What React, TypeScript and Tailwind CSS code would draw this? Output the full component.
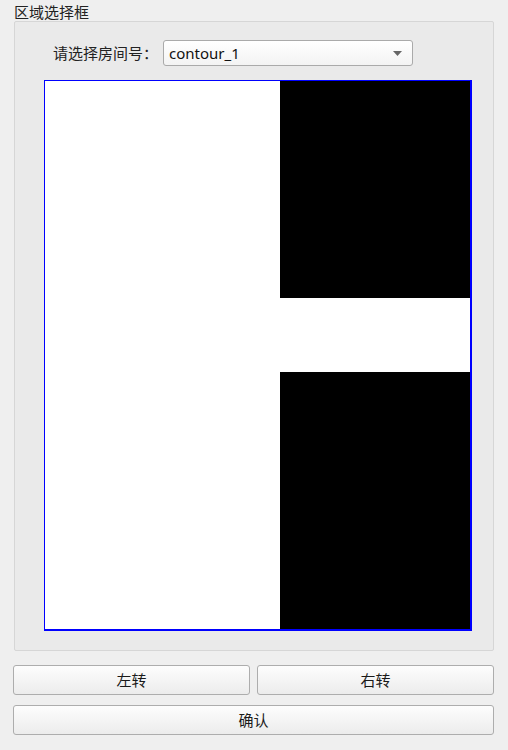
import React from "react";

const font = { fontFamily: '"Noto Sans", "Noto Sans CJK SC", sans-serif' };

function Btn({ children }: { children: React.ReactNode }) {
  return (
    <button className="h-[30px] w-full rounded-[3px] border border-[#adadad] bg-gradient-to-b from-[#fdfdfd] to-[#ececec] text-[15px] text-[#1a1a1a] leading-none flex items-center justify-center">
      {children}
    </button>
  );
}

export default function App() {
  return (
    <div
      className="w-[508px] h-[750px] bg-[#efefef] flex flex-col pl-[13px] pr-[14px] text-[#222]"
      style={font}
    >
      <div className="h-[21px] pt-[3px] pl-[1px] leading-[18px] text-[15px]">区域选择框</div>
      <div className="ml-[1px] h-[630px] border border-[#d6d6d6] rounded-[2px] bg-[#eaeaea] flex flex-col pt-[18px]">
        <div className="flex items-center pl-[38px] h-[26px]">
          <div className="w-[110px] text-[15px] leading-none">请选择房间号：</div>
          <div className="w-[250px] h-[26px] rounded-[3px] border border-[#aaaaaa] bg-gradient-to-b from-[#ffffff] to-[#f3f3f3] flex items-center justify-between pl-[5px] pr-[10px]">
            <span className="text-[15px] leading-none text-[#111]">contour_1</span>
            <svg width="9" height="5" viewBox="0 0 9 5">
              <path d="M0 0 L9 0 L4.5 5 Z" fill="#666" />
            </svg>
          </div>
        </div>
        <div className="mt-[14px] ml-[29px] w-[428px] h-[551px] border-l border-t border-r-2 border-b-2 border-[#0000ff] flex bg-white">
          <div className="w-[235px] bg-white" />
          <div className="flex-1 flex flex-col">
            <div className="h-[217px] bg-black" />
            <div className="h-[74px] bg-white" />
            <div className="flex-1 bg-black" />
          </div>
        </div>
      </div>
      <div className="mt-[14px] grid grid-cols-2 gap-[7px]">
        <Btn>左转</Btn>
        <Btn>右转</Btn>
      </div>
      <div className="mt-[10px]">
        <Btn>确认</Btn>
      </div>
    </div>
  );
}
